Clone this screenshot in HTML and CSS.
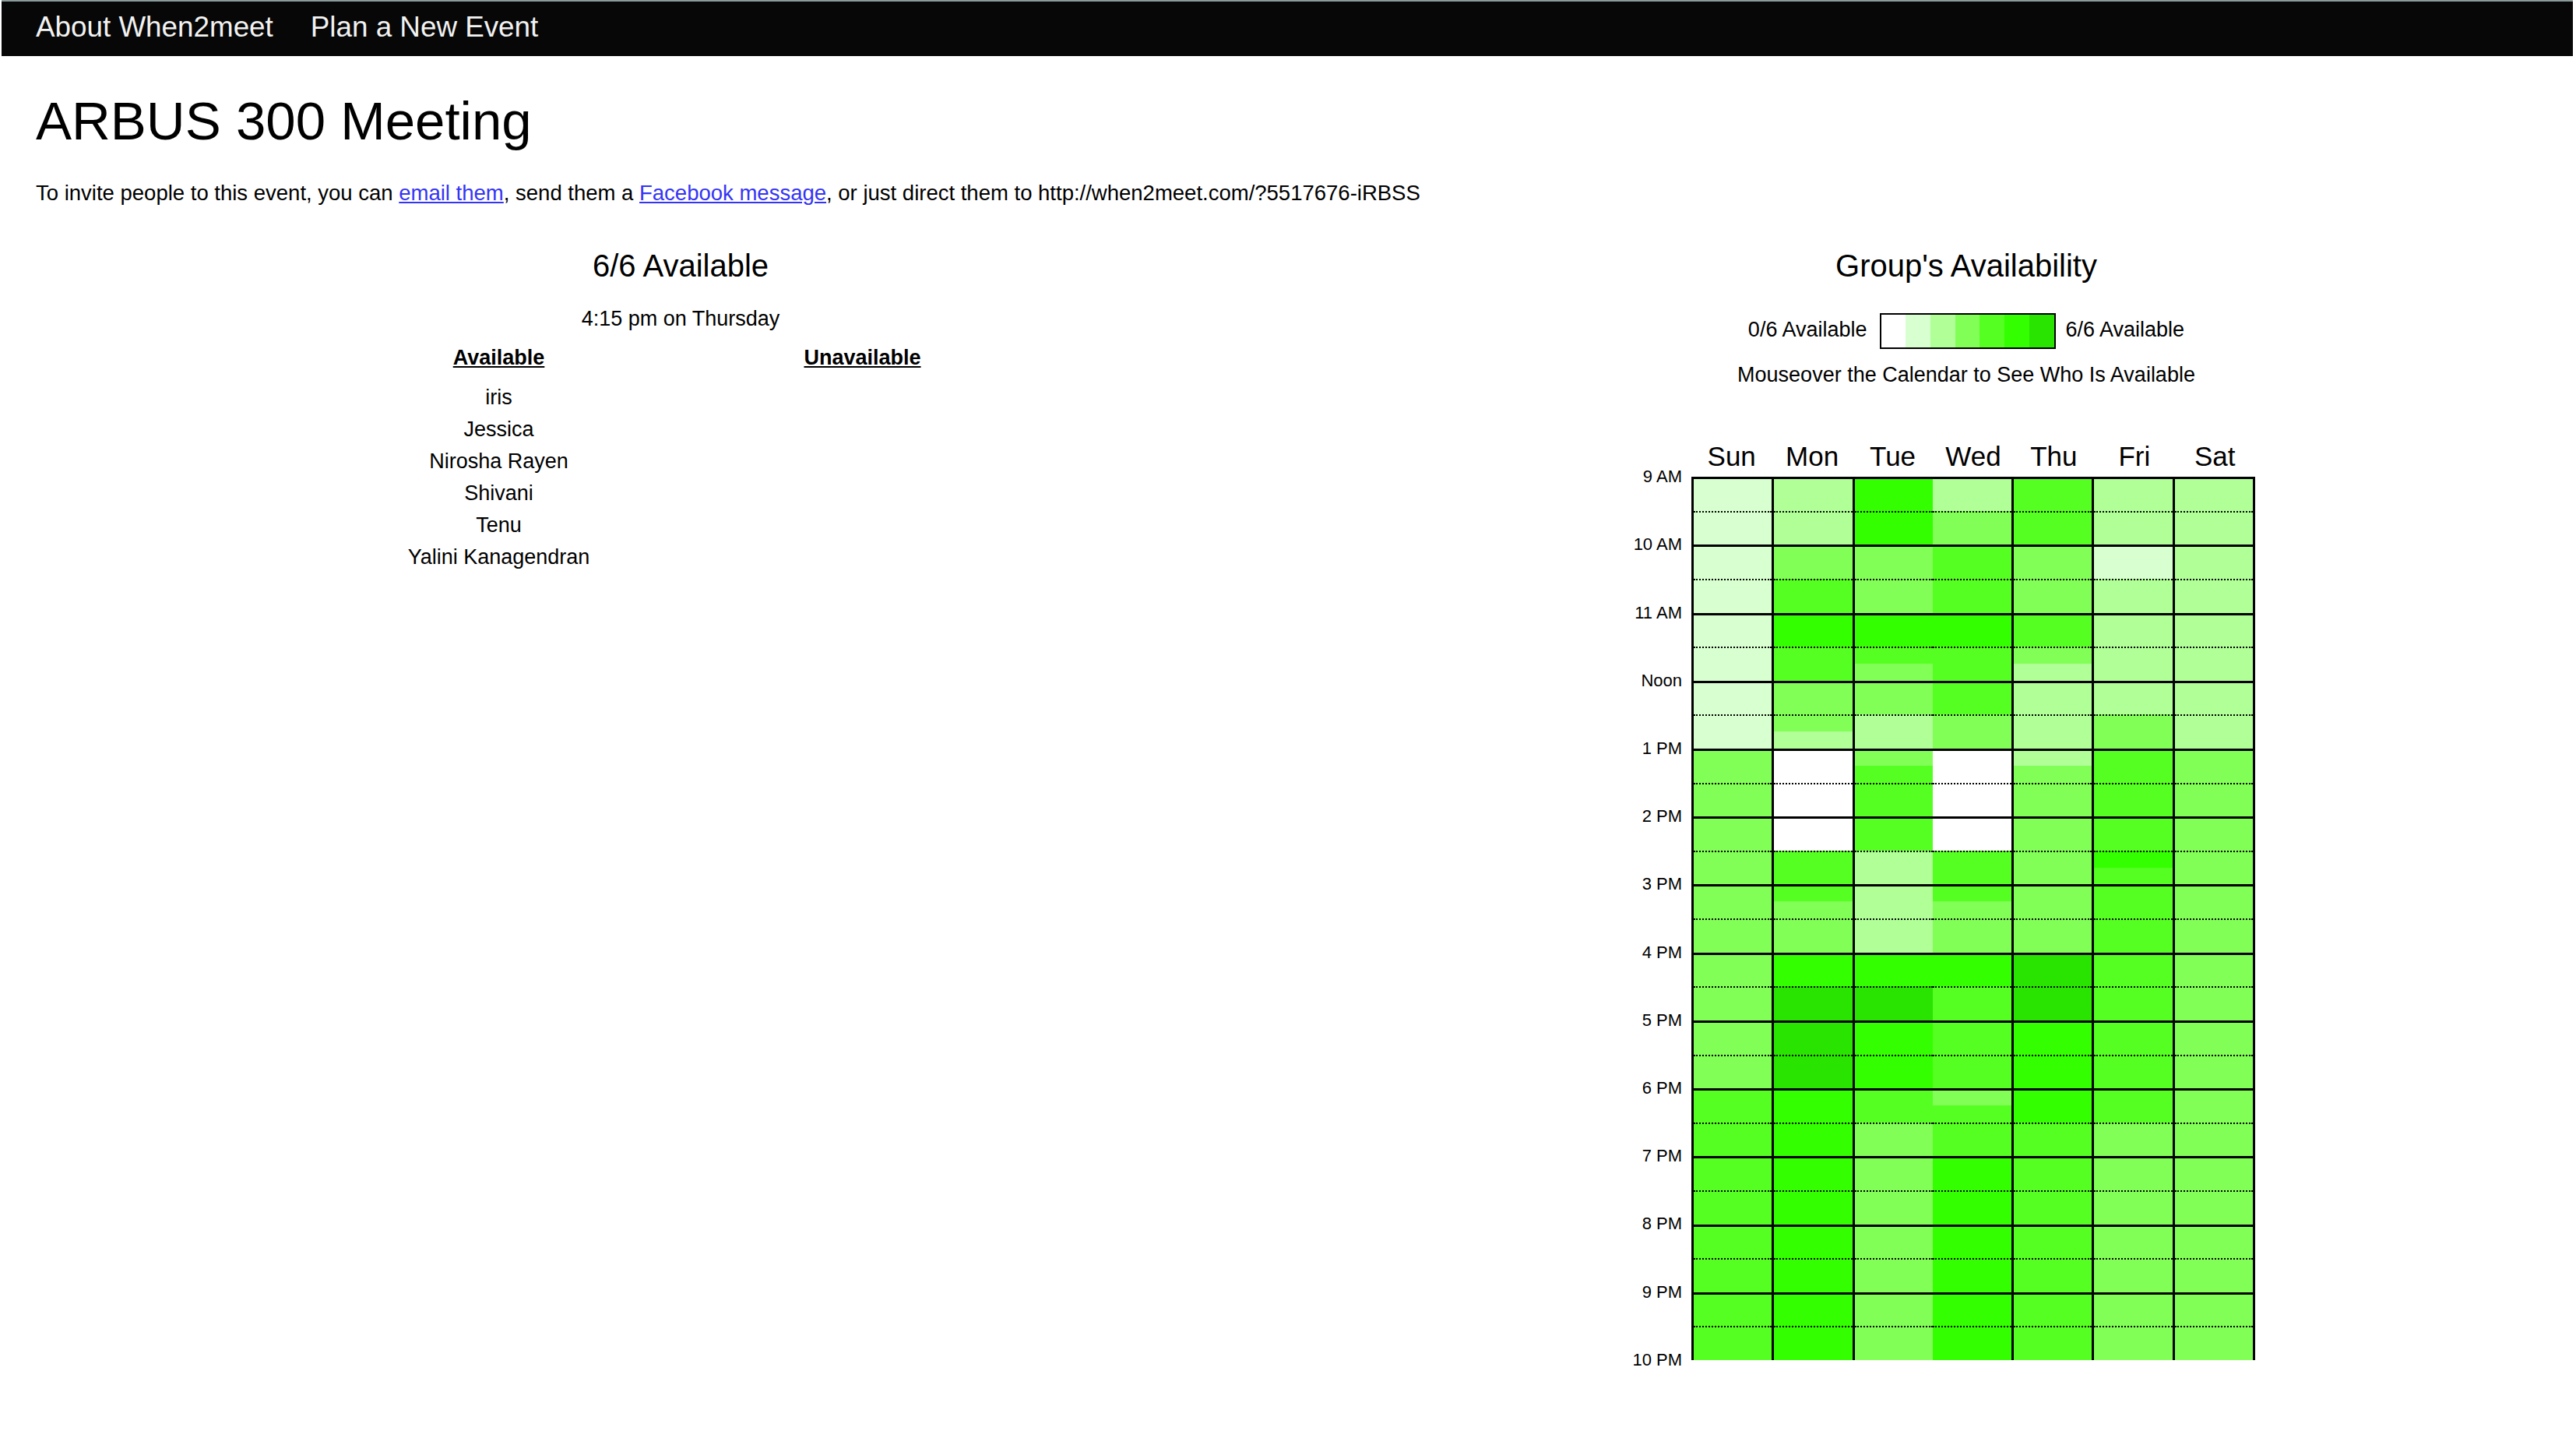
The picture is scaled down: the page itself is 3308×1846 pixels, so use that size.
FILE: index.html
```html
<!DOCTYPE html>
<html>
<head>
<meta charset="utf-8">
<title>ARBUS 300 Meeting - When2meet</title>
<link rel="stylesheet" href="styles.css">
</head>
<body>
<div class="nav">
  <a href="#">About When2meet</a>
  <a href="#">Plan a New Event</a>
</div>
<div class="main">
  <h1 class="title">ARBUS 300 Meeting</h1>
  <p class="invite">To invite people to this event, you can <a href="#">email them</a>, send them a <a href="#">Facebook message</a>, or just direct them to http://when2meet.com/?5517676-iRBSS</p>
  <div class="panels">
    <div class="left">
      <h2 class="heading">6/6 Available</h2>
      <div class="when">4:15 pm on Thursday</div>
      <div class="cols">
        <div class="col">
          <div class="col-head">Available</div>
          <div class="names">
            <div>iris</div>
            <div>Jessica</div>
            <div>Nirosha Rayen</div>
            <div>Shivani</div>
            <div>Tenu</div>
            <div>Yalini Kanagendran</div>
          </div>
        </div>
        <div class="col">
          <div class="col-head">Unavailable</div>
          <div class="names"></div>
        </div>
      </div>
    </div>
    <div class="right">
      <h2 class="heading">Group's Availability</h2>
      <div class="legend">
        <span class="legend-text">0/6 Available</span>
        <div class="scale"><span class="c0"></span><span class="c1"></span><span class="c2"></span><span class="c3"></span><span class="c4"></span><span class="c5"></span><span class="c6"></span></div>
        <span class="legend-text">6/6 Available</span>
      </div>
      <div class="hint">Mouseover the Calendar to See Who Is Available</div>
      <div class="calendar">
        <div class="times">
          <div class="time">9 AM</div>
          <div class="time">10 AM</div>
          <div class="time">11 AM</div>
          <div class="time">Noon</div>
          <div class="time">1 PM</div>
          <div class="time">2 PM</div>
          <div class="time">3 PM</div>
          <div class="time">4 PM</div>
          <div class="time">5 PM</div>
          <div class="time">6 PM</div>
          <div class="time">7 PM</div>
          <div class="time">8 PM</div>
          <div class="time">9 PM</div>
          <div class="time">10 PM</div>
        </div>
        <div class="board">
          <div class="days">
            <div class="day-name">Sun</div>
            <div class="day-name">Mon</div>
            <div class="day-name">Tue</div>
            <div class="day-name">Wed</div>
            <div class="day-name">Thu</div>
            <div class="day-name">Fri</div>
            <div class="day-name">Sat</div>
          </div>
          <div class="grid">
            <div class="day">
              <div class="c1"></div><div class="c1"></div><div class="c1"></div><div class="c1"></div>
              <div class="c1"></div><div class="c1"></div><div class="c1"></div><div class="c1"></div>
              <div class="c1"></div><div class="c1"></div><div class="c1"></div><div class="c1"></div>
              <div class="c1"></div><div class="c1"></div><div class="c1"></div><div class="c1"></div>
              <div class="c3"></div><div class="c3"></div><div class="c3"></div><div class="c3"></div>
              <div class="c3"></div><div class="c3"></div><div class="c3"></div><div class="c3"></div>
              <div class="c3"></div><div class="c3"></div><div class="c3"></div><div class="c3"></div>
              <div class="c3"></div><div class="c3"></div><div class="c3"></div><div class="c3"></div>
              <div class="c3"></div><div class="c3"></div><div class="c3"></div><div class="c3"></div>
              <div class="c4"></div><div class="c4"></div><div class="c4"></div><div class="c4"></div>
              <div class="c4"></div><div class="c4"></div><div class="c4"></div><div class="c4"></div>
              <div class="c4"></div><div class="c4"></div><div class="c4"></div><div class="c4"></div>
              <div class="c4"></div><div class="c4"></div><div class="c4"></div><div class="c4"></div>
            </div>
            <div class="day">
              <div class="c2"></div><div class="c2"></div><div class="c2"></div><div class="c2"></div>
              <div class="c3"></div><div class="c3"></div><div class="c4"></div><div class="c4"></div>
              <div class="c5"></div><div class="c5"></div><div class="c4"></div><div class="c4"></div>
              <div class="c3"></div><div class="c3"></div><div class="c3"></div><div class="c2"></div>
              <div class="c0"></div><div class="c0"></div><div class="c0"></div><div class="c0"></div>
              <div class="c0"></div><div class="c0"></div><div class="c4"></div><div class="c4"></div>
              <div class="c4"></div><div class="c3"></div><div class="c3"></div><div class="c3"></div>
              <div class="c5"></div><div class="c5"></div><div class="c6"></div><div class="c6"></div>
              <div class="c6"></div><div class="c6"></div><div class="c6"></div><div class="c6"></div>
              <div class="c5"></div><div class="c5"></div><div class="c5"></div><div class="c5"></div>
              <div class="c5"></div><div class="c5"></div><div class="c5"></div><div class="c5"></div>
              <div class="c5"></div><div class="c5"></div><div class="c5"></div><div class="c5"></div>
              <div class="c5"></div><div class="c5"></div><div class="c5"></div><div class="c5"></div>
            </div>
            <div class="day open">
              <div class="c5"></div><div class="c5"></div><div class="c5"></div><div class="c5"></div>
              <div class="c3"></div><div class="c3"></div><div class="c3"></div><div class="c3"></div>
              <div class="c5"></div><div class="c5"></div><div class="c4"></div><div class="c3"></div>
              <div class="c3"></div><div class="c3"></div><div class="c2"></div><div class="c2"></div>
              <div class="c3"></div><div class="c4"></div><div class="c4"></div><div class="c4"></div>
              <div class="c4"></div><div class="c4"></div><div class="c2"></div><div class="c2"></div>
              <div class="c2"></div><div class="c2"></div><div class="c2"></div><div class="c2"></div>
              <div class="c5"></div><div class="c5"></div><div class="c6"></div><div class="c6"></div>
              <div class="c5"></div><div class="c5"></div><div class="c5"></div><div class="c5"></div>
              <div class="c4"></div><div class="c4"></div><div class="c3"></div><div class="c3"></div>
              <div class="c3"></div><div class="c3"></div><div class="c3"></div><div class="c3"></div>
              <div class="c3"></div><div class="c3"></div><div class="c3"></div><div class="c3"></div>
              <div class="c3"></div><div class="c3"></div><div class="c3"></div><div class="c3"></div>
            </div>
            <div class="day">
              <div class="c2"></div><div class="c2"></div><div class="c3"></div><div class="c3"></div>
              <div class="c4"></div><div class="c4"></div><div class="c4"></div><div class="c4"></div>
              <div class="c5"></div><div class="c5"></div><div class="c4"></div><div class="c4"></div>
              <div class="c4"></div><div class="c4"></div><div class="c3"></div><div class="c3"></div>
              <div class="c0"></div><div class="c0"></div><div class="c0"></div><div class="c0"></div>
              <div class="c0"></div><div class="c0"></div><div class="c4"></div><div class="c4"></div>
              <div class="c4"></div><div class="c3"></div><div class="c3"></div><div class="c3"></div>
              <div class="c5"></div><div class="c5"></div><div class="c4"></div><div class="c4"></div>
              <div class="c4"></div><div class="c4"></div><div class="c4"></div><div class="c4"></div>
              <div class="c3"></div><div class="c4"></div><div class="c4"></div><div class="c4"></div>
              <div class="c5"></div><div class="c5"></div><div class="c5"></div><div class="c5"></div>
              <div class="c5"></div><div class="c5"></div><div class="c5"></div><div class="c5"></div>
              <div class="c5"></div><div class="c5"></div><div class="c5"></div><div class="c5"></div>
            </div>
            <div class="day">
              <div class="c4"></div><div class="c4"></div><div class="c4"></div><div class="c4"></div>
              <div class="c3"></div><div class="c3"></div><div class="c3"></div><div class="c3"></div>
              <div class="c4"></div><div class="c4"></div><div class="c3"></div><div class="c2"></div>
              <div class="c2"></div><div class="c2"></div><div class="c2"></div><div class="c2"></div>
              <div class="c2"></div><div class="c3"></div><div class="c3"></div><div class="c3"></div>
              <div class="c3"></div><div class="c3"></div><div class="c3"></div><div class="c3"></div>
              <div class="c3"></div><div class="c3"></div><div class="c3"></div><div class="c3"></div>
              <div class="c6"></div><div class="c6"></div><div class="c6"></div><div class="c6"></div>
              <div class="c5"></div><div class="c5"></div><div class="c5"></div><div class="c5"></div>
              <div class="c5"></div><div class="c5"></div><div class="c4"></div><div class="c4"></div>
              <div class="c4"></div><div class="c4"></div><div class="c4"></div><div class="c4"></div>
              <div class="c4"></div><div class="c4"></div><div class="c4"></div><div class="c4"></div>
              <div class="c4"></div><div class="c4"></div><div class="c4"></div><div class="c4"></div>
            </div>
            <div class="day">
              <div class="c2"></div><div class="c2"></div><div class="c2"></div><div class="c2"></div>
              <div class="c1"></div><div class="c1"></div><div class="c2"></div><div class="c2"></div>
              <div class="c2"></div><div class="c2"></div><div class="c2"></div><div class="c2"></div>
              <div class="c2"></div><div class="c2"></div><div class="c3"></div><div class="c3"></div>
              <div class="c4"></div><div class="c4"></div><div class="c4"></div><div class="c4"></div>
              <div class="c4"></div><div class="c4"></div><div class="c5"></div><div class="c4"></div>
              <div class="c4"></div><div class="c4"></div><div class="c4"></div><div class="c4"></div>
              <div class="c4"></div><div class="c4"></div><div class="c4"></div><div class="c4"></div>
              <div class="c4"></div><div class="c4"></div><div class="c4"></div><div class="c4"></div>
              <div class="c4"></div><div class="c4"></div><div class="c3"></div><div class="c3"></div>
              <div class="c3"></div><div class="c3"></div><div class="c3"></div><div class="c3"></div>
              <div class="c3"></div><div class="c3"></div><div class="c3"></div><div class="c3"></div>
              <div class="c3"></div><div class="c3"></div><div class="c3"></div><div class="c3"></div>
            </div>
            <div class="day">
              <div class="c2"></div><div class="c2"></div><div class="c2"></div><div class="c2"></div>
              <div class="c2"></div><div class="c2"></div><div class="c2"></div><div class="c2"></div>
              <div class="c2"></div><div class="c2"></div><div class="c2"></div><div class="c2"></div>
              <div class="c2"></div><div class="c2"></div><div class="c2"></div><div class="c2"></div>
              <div class="c3"></div><div class="c3"></div><div class="c3"></div><div class="c3"></div>
              <div class="c3"></div><div class="c3"></div><div class="c3"></div><div class="c3"></div>
              <div class="c3"></div><div class="c3"></div><div class="c3"></div><div class="c3"></div>
              <div class="c3"></div><div class="c3"></div><div class="c3"></div><div class="c3"></div>
              <div class="c3"></div><div class="c3"></div><div class="c3"></div><div class="c3"></div>
              <div class="c3"></div><div class="c3"></div><div class="c3"></div><div class="c3"></div>
              <div class="c3"></div><div class="c3"></div><div class="c3"></div><div class="c3"></div>
              <div class="c3"></div><div class="c3"></div><div class="c3"></div><div class="c3"></div>
              <div class="c3"></div><div class="c3"></div><div class="c3"></div><div class="c3"></div>
            </div>
          </div>
        </div>
      </div>
    </div>
  </div>
</div>
</body>
</html>
```

FILE: styles.css
```css
* {
  box-sizing: border-box;
}

html,
body {
  margin: 0;
  background: #ffffff;
}

body {
  font-family: "Liberation Sans", Arial, sans-serif;
  color: #000000;
  width: 3308px;
}

.nav {
  margin: 0 4px 0 2px;
  height: 72px;
  border-top: 2px solid #8a9999;
  background: #070707;
  padding: 0 0 4px 44px;
  display: flex;
  gap: 48px;
}

.nav a {
  color: #f2f2f2;
  text-decoration: none;
  font-size: 36.8px;
  line-height: 66px;
}

.main {
  padding-left: 46px;
}

.title {
  margin: 44px 0 0;
  font-size: 69px;
  line-height: 80px;
  font-weight: normal;
}

.invite {
  margin: 35.3px 0 0;
  font-size: 27.5px;
  line-height: 34px;
}

.invite a {
  color: #3434f4;
}

.panels {
  display: flex;
  margin-top: 52.8px;
  padding-left: 361px;
  gap: 717px;
}

.left {
  width: 934px;
  text-align: center;
}

.right {
  width: 934px;
}

.heading {
  margin: 0;
  font-size: 40px;
  line-height: 46px;
  font-weight: normal;
  text-align: center;
}

.when {
  margin-top: 28.6px;
  font-size: 27px;
  line-height: 32px;
}

.cols {
  display: flex;
  margin-top: 18px;
}

.col {
  width: 467px;
}

.col-head {
  font-size: 27px;
  line-height: 32px;
  font-weight: bold;
  text-decoration: underline;
}

.names {
  margin-top: 15.5px;
  font-size: 27px;
  line-height: 41px;
}

.legend {
  display: flex;
  justify-content: center;
  align-items: flex-start;
  margin-top: 38px;
}

.legend-text {
  margin-top: 5px;
  font-size: 27px;
  line-height: 32px;
}

.scale {
  display: flex;
  width: 226px;
  height: 46px;
  margin: 0 13px 0 16px;
  border: 2px solid #000000;
}

.scale span {
  flex: 1;
}

.hint {
  margin-top: 16.6px;
  text-align: center;
  font-size: 27px;
  line-height: 32px;
}

.calendar {
  display: flex;
  margin-top: 69.4px;
  margin-left: 2px;
}

.times {
  width: 100px;
  margin-right: 12px;
  padding-top: 37px;
  text-align: right;
  font-size: 22px;
}

.time {
  height: 87.23px;
  line-height: 18px;
}

.days {
  display: flex;
  width: 724px;
  height: 40px;
  margin-bottom: 6px;
  padding-left: 0;
}

.day-name {
  flex: 1;
  text-align: center;
  font-size: 35px;
  line-height: 40px;
}

.grid {
  display: flex;
  width: 724px;
  height: 1134px;
  border-left: 3px solid #000000;
}

.day {
  flex: 1;
  display: grid;
  grid-template-rows: repeat(52, 1fr);
  border-right: 3px solid #000000;
}

.day.open {
  border-right: none;
}

.day > div:nth-child(4n+1) {
  border-top: 3px solid #000000;
}

.day > div:nth-child(4n+3) {
  border-top: 2px dotted #000000;
}

.c0 { background: #ffffff; }
.c1 { background: #d8ffcf; }
.c2 { background: #b0ff97; }
.c3 { background: #82ff57; }
.c4 { background: #56ff22; }
.c5 { background: #33ff00; }
.c6 { background: #29e400; }
```
